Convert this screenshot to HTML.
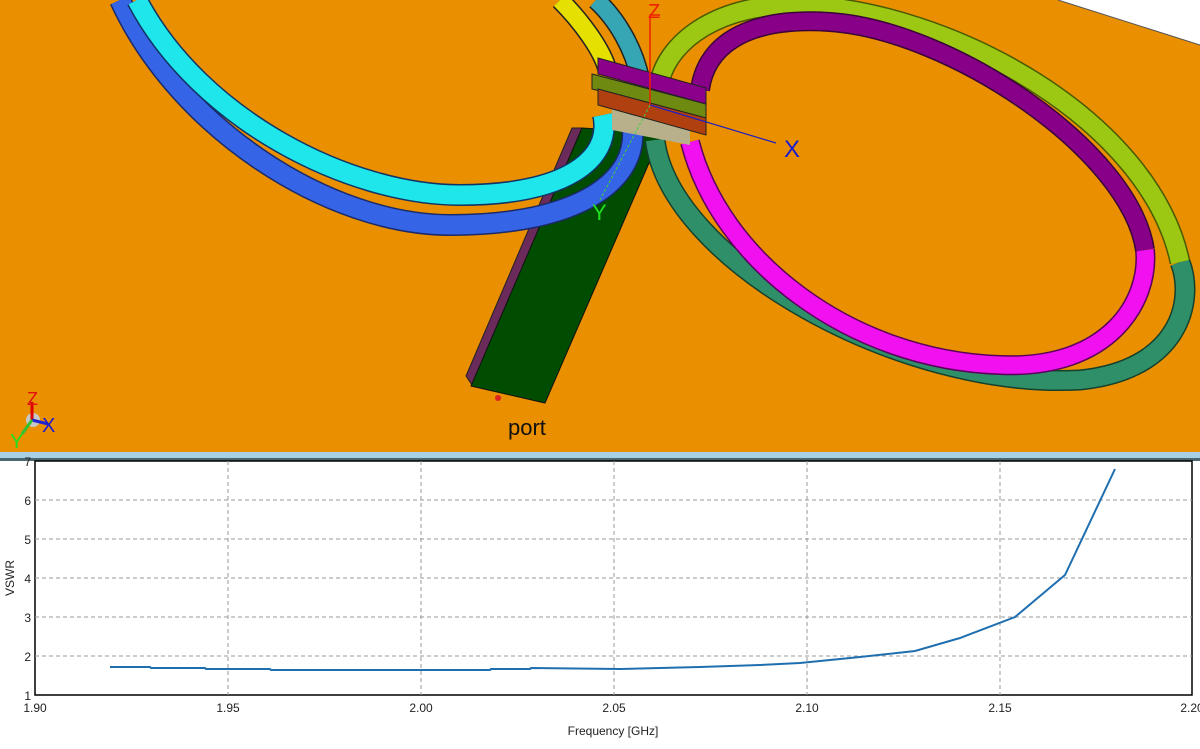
<!DOCTYPE html>
<html><head><meta charset="utf-8"><style>
html,body{margin:0;padding:0;background:#fff;width:1200px;height:749px;overflow:hidden}
svg{display:block}
</style></head><body>
<svg width="1200" height="749" viewBox="0 0 1200 749" xmlns="http://www.w3.org/2000/svg" font-family="Liberation Sans, sans-serif">
<rect x="0" y="0" width="1200" height="453" fill="#e98f00"/>
<polygon points="1058,0 1200,0 1200,45" fill="#ffffff"/>
<line x1="1058" y1="0" x2="1200" y2="45" stroke="#555" stroke-width="1"/>
<!-- feed strip -->
<polygon points="572,128 582,128 472,385 466,376" fill="#6a2a5a" stroke="#222" stroke-width="1"/>
<polygon points="582,128 662,133 545,403 471,386" fill="#004c00" stroke="#111" stroke-width="1"/>
<circle cx="498" cy="398" r="3" fill="#d22"/>
<!-- left ring -->
<g fill="none" stroke-linecap="butt">
<path d="M560,0 C580,20 603,50 608,72" stroke="#222" stroke-width="20"/>
<path d="M560,0 C580,20 603,50 608,72" stroke="#e6e000" stroke-width="17"/>
<path d="M596,0 C618,20 634,50 640,78" stroke="#222" stroke-width="20"/>
<path d="M596,0 C618,20 634,50 640,78" stroke="#36a6b4" stroke-width="17"/>
<path d="M120,0 C180,130 330,225 450,225 C580,225 640,180 632,125" stroke="#1a2a6a" stroke-width="22"/>
<path d="M120,0 C180,130 330,225 450,225 C580,225 640,180 632,125" stroke="#3565e6" stroke-width="19"/>
<path d="M137,0 C200,120 350,195 460,195 C565,195 612,160 603,115" stroke="#136" stroke-width="22"/>
<path d="M137,0 C200,120 350,195 460,195 C565,195 612,160 603,115" stroke="#1ee6ea" stroke-width="19"/>
</g>
<!-- right ring -->
<g fill="none">
<path d="M655,140 C670,260 900,390 1080,380 C1180,370 1195,300 1180,262" stroke="#15402c" stroke-width="21"/>
<path d="M655,140 C670,260 900,390 1080,380 C1180,370 1195,300 1180,262" stroke="#2f8f68" stroke-width="18"/>
<path d="M1180,262 C1150,120 950,10 800,5 C720,3 670,40 660,80" stroke="#4a5a00" stroke-width="21"/>
<path d="M1180,262 C1150,120 950,10 800,5 C720,3 670,40 660,80" stroke="#9cc814" stroke-width="18"/>
<path d="M690,142 C720,260 850,360 1000,365 C1110,370 1150,300 1145,250" stroke="#5a005a" stroke-width="20"/>
<path d="M690,142 C720,260 850,360 1000,365 C1110,370 1150,300 1145,250" stroke="#f010f0" stroke-width="17"/>
<path d="M1145,250 C1130,150 950,30 830,22 C740,16 705,50 700,90" stroke="#3a003a" stroke-width="20"/>
<path d="M1145,250 C1130,150 950,30 830,22 C740,16 705,50 700,90" stroke="#880088" stroke-width="17"/>
</g>
<!-- connector -->
<polygon points="612,108 690,125 690,145 612,130" fill="#b8b08a"/>
<polygon points="598,58 706,88 706,104 598,74" fill="#8a008a" stroke="#222" stroke-width="1"/>
<polygon points="592,74 706,104 706,118 592,89" fill="#6e8a10" stroke="#222" stroke-width="1"/>
<polygon points="598,89 706,118 706,135 598,105" fill="#b04010" stroke="#222" stroke-width="1"/>
<!-- axes -->
<polyline points="650,105 650,15 660,15" fill="none" stroke="#f02000" stroke-width="1.5"/>
<text x="648" y="18" font-size="20" fill="#f02000">Z</text>
<line x1="650" y1="105" x2="776" y2="143" stroke="#2020c0" stroke-width="1.2"/>
<text x="784" y="157" font-size="24" fill="#1a1ad0">X</text>
<line x1="650" y1="105" x2="600" y2="200" stroke="#40d040" stroke-width="1" stroke-dasharray="3,2"/>
<text x="592" y="220" font-size="22" fill="#20e020">Y</text>
<text x="508" y="435" font-size="22" fill="#111">port</text>
<!-- triad -->
<circle cx="33" cy="420" r="7" fill="#c8c8c8"/>
<line x1="32" y1="420" x2="32" y2="402" stroke="#d00" stroke-width="3"/>
<line x1="32" y1="420" x2="48" y2="424" stroke="#2222d0" stroke-width="3"/>
<line x1="32" y1="420" x2="22" y2="434" stroke="#30c030" stroke-width="3"/>
<text x="27" y="405" font-size="18" fill="#e01010">Z</text>
<text x="42" y="432" font-size="20" fill="#1a1ad0">X</text>
<text x="10" y="448" font-size="20" fill="#20e020">Y</text>
<!-- separator -->
<rect x="0" y="452" width="1200" height="6" fill="#a8d0e4"/>
<rect x="0" y="458" width="1200" height="3" fill="#4a6670"/>
<!-- chart -->
<rect x="35" y="461" width="1157" height="234" fill="#fff" stroke="#000" stroke-width="1.5"/>
<g stroke="#999" stroke-width="1" stroke-dasharray="4,3">
<line x1="35" y1="500" x2="1192" y2="500"/><line x1="35" y1="539" x2="1192" y2="539"/>
<line x1="35" y1="578" x2="1192" y2="578"/><line x1="35" y1="617" x2="1192" y2="617"/>
<line x1="35" y1="656" x2="1192" y2="656"/>
<line x1="228" y1="461" x2="228" y2="695"/><line x1="421" y1="461" x2="421" y2="695"/>
<line x1="614" y1="461" x2="614" y2="695"/><line x1="807" y1="461" x2="807" y2="695"/>
<line x1="1000" y1="461" x2="1000" y2="695"/>
</g>
<polyline points="110,667 150,667 151,668 205,668 206,669 270,669 271,670 490,670 491,669 530,669 531,668 620,669 700,667 760,665 800,663 860,657 915,651 960,638 1015,617 1065,575 1115,469" fill="none" stroke="#1f6fb0" stroke-width="2"/>
<g font-size="12" fill="#222" text-anchor="end">
<text x="31" y="466">7</text><text x="31" y="505">6</text><text x="31" y="544">5</text>
<text x="31" y="583">4</text><text x="31" y="622">3</text><text x="31" y="661">2</text><text x="31" y="700">1</text>
</g>
<g font-size="12" fill="#222" text-anchor="middle">
<text x="35" y="712">1.90</text><text x="228" y="712">1.95</text><text x="421" y="712">2.00</text>
<text x="614" y="712">2.05</text><text x="807" y="712">2.10</text><text x="1000" y="712">2.15</text><text x="1192" y="712">2.20</text>
<text x="613" y="735">Frequency [GHz]</text>
</g>
<text transform="translate(14,578) rotate(-90)" font-size="12" fill="#222" text-anchor="middle">VSWR</text>
</svg>
</body></html>
